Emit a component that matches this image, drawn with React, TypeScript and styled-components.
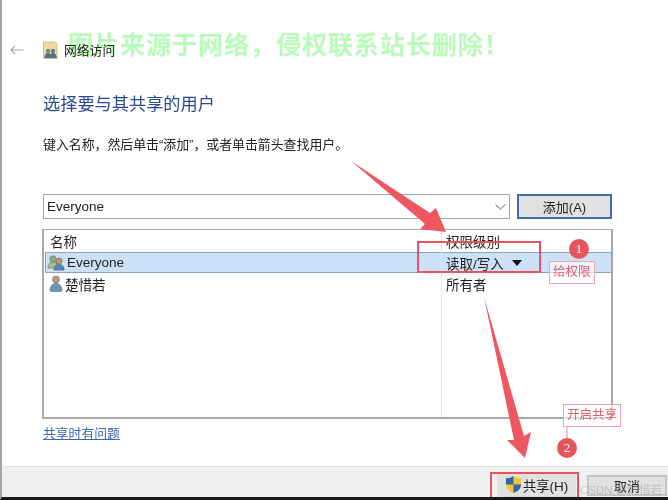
import styled, { createGlobalStyle } from 'styled-components';

const CJK = `"Liberation Sans", "Noto Sans CJK SC", sans-serif`;

const GlobalStyle = createGlobalStyle`
  html, body {
    margin: 0;
    background: #fff;
  }
  * {
    box-sizing: border-box;
  }
`;

const FolderIcon = () => (
  <svg width="15" height="18" viewBox="0 0 15 18">
    <path d="M0.5 1h10.5l3 2v14.5h-13.500z" fill="#efd9a0" stroke="#c9b27a" strokeWidth="0.8" />
    <circle cx="5" cy="10" r="2.200" fill="#6f8f8a" />
    <circle cx="10" cy="10" r="2.200" fill="#5f7f96" />
    <path d="M1.500 17c0-3.500 1.500-5 3.500-5s3 1 3 5zM6.500 17c0-3.500 1.500-5 3.500-5s3.800 1.500 3.800 5z" fill="#4f7688" />
  </svg>
);

const UsersIcon = () => (
  <svg width="18" height="17" viewBox="0 0 18 17">
    <circle cx="6" cy="5" r="3.200" fill="#8fa98a" stroke="#66805f" strokeWidth="0.7" />
    <path d="M1 14c0-4 2-6 5-6s5 2 5 6z" fill="#a9bd96" stroke="#66805f" strokeWidth="0.7" />
    <circle cx="12" cy="7" r="3" fill="#b89a78" stroke="#7d6a55" strokeWidth="0.7" />
    <path d="M7 16c0-4 2-5.500 5-5.500s5 1.500 5 5.500z" fill="#5c86b8" stroke="#3f628c" strokeWidth="0.7" />
  </svg>
);

const UserIcon = () => (
  <svg width="14" height="17" viewBox="0 0 14 17">
    <circle cx="7" cy="4.500" r="3.500" fill="#b59a82" stroke="#7a6a5c" strokeWidth="0.6" />
    <path d="M1 16c0-5 2.500-7.500 6-7.500s6 2.500 6 7.500c-2 1-10 1-12 0z" fill="#6f93b5" stroke="#4b6c8c" strokeWidth="0.6" />
  </svg>
);

const ShieldIcon = () => (
  <svg width="17" height="19" viewBox="0 0 17 19">
    <path d="M8.500 1c2 1.500 4.500 2.200 7.500 2.300v6.200c0 4-3 7-7.500 8.500C4 16.500 1 13.500 1 9.500V3.300C4 3.200 6.500 2.500 8.500 1z" fill="#f4c430" />
    <path d="M8.500 1c-2 1.500-4.500 2.200-7.500 2.300v6.200h7.500zM8.500 9.500V18c4.500-1.500 7.500-4.500 7.500-8.500z" fill="#2f64ae" />
  </svg>
);

const App = () => (
  <>
    <GlobalStyle />
    <Window>
      <Main>
        <TitleBar>
          <BackArrow viewBox="0 0 14 10">
            <path d="M13.500 5H1M5 1L1 5l4 4" fill="none" stroke="#a8a8a8" strokeWidth="1.200" />
          </BackArrow>
          <FolderIcon />
          <WindowTitle>网络访问</WindowTitle>
        </TitleBar>
        <Heading>选择要与其共享的用户</Heading>
        <Hint>键入名称，然后单击“添加”，或者单击箭头查找用户。</Hint>
        <InputRow>
          <ComboBox>
            <span>Everyone</span>
            <svg width="11" height="6" viewBox="0 0 11 6">
              <path d="M0.500 0.500L5.500 5l5-4.500" fill="none" stroke="#666" strokeWidth="1" />
            </svg>
          </ComboBox>
          <AddButton>添加(A)</AddButton>
        </InputRow>
        <UserList>
          <ListRow $height={22}>
            <NameCell $inset={4}>名称</NameCell>
            <LevelCell>权限级别</LevelCell>
          </ListRow>
          <ListRow $selected>
            <NameCell $inset={1}>
              <UsersIcon />
              Everyone
            </NameCell>
            <LevelCell>
              读取/写入
              <Caret />
            </LevelCell>
          </ListRow>
          <ListRow>
            <NameCell $inset={3}>
              <UserIcon />
              楚惜若
            </NameCell>
            <LevelCell>所有者</LevelCell>
          </ListRow>
          <ColumnLine />
        </UserList>
        <HelpLink>共享时有问题</HelpLink>
      </Main>
      <Footer>
        <ShareButton>
          <ShieldIcon />
          共享(H)
        </ShareButton>
        <CancelButton>取消</CancelButton>
      </Footer>
      <Watermark>图片来源于网络，侵权联系站长删除！</Watermark>
      <Credit>CSDN @楚惜若</Credit>
      <Arrows viewBox="0 0 668 500">
        <path d="M351 161L430 213L436 208L446 232L420 229L425 224z" fill="#ee5660" />
        <path d="M484 297L524 436L531 432L525 458L507 440L514 440z" fill="#ee5660" />
        <path d="M567 427V438" stroke="#e88a94" strokeWidth="1" />
      </Arrows>
      <Highlight />
      <ShareHighlight />
      <Step $x={569} $y={239}>1</Step>
      <Step $x={557} $y={438}>2</Step>
      <Note $x={549} $y={261}>给权限</Note>
      <Note $x={563} $y={404}>开启共享</Note>
    </Window>
  </>
);

const Window = styled.div`
  position: relative;
  display: flex;
  flex-direction: column;
  width: 668px;
  height: 500px;
  overflow: hidden;
  border-left: 2px solid #a6a6a6;
  border-bottom: 3px solid #1a1a1a;
  font-family: ${CJK};
  color: #222;
  filter: blur(0.35px);
`;

const Main = styled.div`
  flex: 1;
  display: flex;
  flex-direction: column;
  padding: 40px 56px 0 41px;
`;

const TitleBar = styled.div`
  display: flex;
  align-items: center;
  height: 19px;
  gap: 6px;
  margin-left: -33px;
`;

const BackArrow = styled.svg`
  width: 14px;
  height: 10px;
  margin-right: 13px;
`;

const WindowTitle = styled.span`
  font-size: 12.800px;
`;

const Heading = styled.h1`
  margin: 35px 0 0;
  font-size: 17.200px;
  line-height: 20px;
  font-weight: 400;
  color: #2b4b90;
`;

const Hint = styled.p`
  margin: 22px 0 0;
  font-size: 12.900px;
  line-height: 18px;
  color: #222;
`;

const InputRow = styled.div`
  display: flex;
  gap: 7px;
  margin-top: 40px;
`;

const ComboBox = styled.div`
  flex: 1;
  display: flex;
  align-items: center;
  justify-content: space-between;
  height: 25px;
  padding: 0 3px 0 3px;
  border: 1.500px solid #a3a3a3;
  font-size: 13.500px;
`;

const AddButton = styled.div`
  display: flex;
  align-items: center;
  justify-content: center;
  width: 95px;
  height: 25px;
  border: 2px solid #3f6ca8;
  background: #e1e1e1;
  font-size: 13px;
`;

const UserList = styled.div`
  position: relative;
  display: flex;
  flex-direction: column;
  height: 190px;
  margin: 10px -1px 0 -1px;
  border: 2px solid #a9a9a9;
  border-top-width: 1.500px;
`;

const ListRow = styled.div<{ $selected?: boolean; $height?: number }>`
  display: flex;
  align-items: center;
  height: ${(p) => p.$height ?? 21}px;
  margin: 0 -1px 0 1px;
  background: ${(p) => (p.$selected ? '#cce1f7' : 'transparent')};
  border: 1px solid ${(p) => (p.$selected ? '#8da3bb' : 'transparent')};
  font-size: 13.500px;
`;

const NameCell = styled.div<{ $inset: number }>`
  display: flex;
  align-items: center;
  gap: 2px;
  width: 400px;
  padding-left: ${(p) => p.$inset}px;
`;

const LevelCell = styled.div`
  display: flex;
  align-items: center;
  gap: 8px;
`;

const Caret = styled.span`
  width: 0;
  height: 0;
  border-left: 5.500px solid transparent;
  border-right: 5.500px solid transparent;
  border-top: 6px solid #111;
`;

const ColumnLine = styled.div`
  position: absolute;
  top: 0;
  bottom: 0;
  left: 397px;
  width: 1px;
  background: #e6e6e6;
`;

const HelpLink = styled.a`
  margin-top: 6px;
  font-size: 12.800px;
  line-height: 17px;
  color: #3a66b0;
  text-decoration: underline;
`;

const Footer = styled.div`
  display: flex;
  justify-content: flex-end;
  align-items: flex-end;
  gap: 11px;
  height: 31px;
  padding-right: 1px;
  background: #f0f0f0;
  border-top: 1px solid #e2e2e2;
`;

const ShareButton = styled.div`
  display: flex;
  align-items: center;
  justify-content: center;
  gap: 1px;
  width: 79px;
  height: 25px;
  background: #e1e1e1;
  font-size: 13.500px;
`;

const CancelButton = styled.div`
  display: flex;
  align-items: center;
  justify-content: center;
  width: 80px;
  height: 21px;
  margin-bottom: 1px;
  background: #e1e1e1;
  border: 2px solid #c4c4c4;
  font-size: 13px;
`;

const Watermark = styled.div`
  position: absolute;
  top: 30px;
  left: 66px;
  font-size: 25.200px;
  line-height: 30px;
  font-weight: 700;
  letter-spacing: 0.8px;
  white-space: nowrap;
  color: #b9fcb9;
  mix-blend-mode: multiply;
`;

const Credit = styled.div`
  position: absolute;
  top: 481px;
  left: 578px;
  font-size: 11.500px;
  white-space: nowrap;
  color: rgba(150, 150, 150, 0.45);
`;

const Arrows = styled.svg`
  position: absolute;
  top: 0;
  left: -2px;
  width: 668px;
  height: 500px;
  pointer-events: none;
`;

const Highlight = styled.div`
  position: absolute;
  top: 241px;
  left: 415px;
  width: 124px;
  height: 32px;
  border: 2.500px solid #e8545e;
`;

const ShareHighlight = styled.div`
  position: absolute;
  top: 472px;
  left: 488px;
  width: 89px;
  height: 40px;
  border: 2.500px solid #e8545e;
`;

const Step = styled.div<{ $x: number; $y: number }>`
  position: absolute;
  top: ${(p) => p.$y}px;
  left: ${(p) => p.$x - 2}px;
  display: flex;
  align-items: center;
  justify-content: center;
  width: 20px;
  height: 20px;
  border-radius: 50%;
  background: #e8545e;
  color: #fff;
  font-family: "Liberation Serif", serif;
  font-size: 13px;
`;

const Note = styled.div<{ $x: number; $y: number }>`
  position: absolute;
  top: ${(p) => p.$y}px;
  left: ${(p) => p.$x - 2}px;
  padding: 0 3px;
  height: 23px;
  line-height: 21px;
  border: 1px solid #efa3ab;
  background: rgba(255, 255, 255, 0.6);
  color: #e0606c;
  font-size: 12.500px;
  white-space: nowrap;
`;

export default App;
